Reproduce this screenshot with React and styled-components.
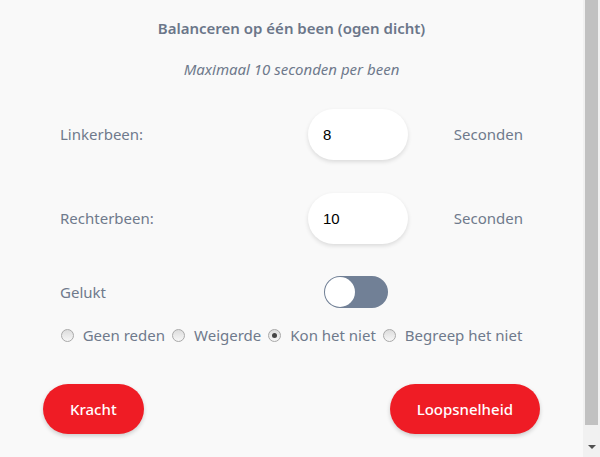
import React, { useState } from "react"
import styled, { createGlobalStyle } from "styled-components"

const GlobalStyle = createGlobalStyle`
  html, body { margin: 0; padding: 0; background: #f9f9f9; overflow: hidden; }
  body { font-family: "Noto Sans", "Open Sans", sans-serif; color: #6f7a8c; }
`

const Shell = styled.div`
  display: flex;
  height: 100vh;
`

const Page = styled.div`
  flex: 1;
  padding: 16px 43px 24px;
  box-sizing: border-box;
  overflow: hidden;
`

const ScrollBar = styled.div`
  width: 17px;
  flex: none;
  background: #f1f1f1;
  display: flex;
  flex-direction: column;
  align-items: center;
`

const Thumb = styled.div`
  width: 13px;
  height: 425px;
  background: #c1c1c1;
`

const ArrowDown = styled.div`
  margin-top: auto;
  margin-bottom: 8px;
  width: 0;
  height: 0;
  border-left: 4px solid transparent;
  border-right: 4px solid transparent;
  border-top: 4px solid #505050;
`

const Title = styled.h2`
  margin: 0;
  text-align: center;
  font-size: 15px;
  font-weight: 600;
  line-height: 24px;
  color: #6b7689;
`

const Subtitle = styled.p`
  margin: 17px 0 0;
  text-align: center;
  font-size: 15px;
  font-style: italic;
  line-height: 24px;
`

const Fields = styled.div`
  margin-top: 11px;
  padding: 0 17px;
  display: flex;
  flex-direction: column;
`

const Row = styled.div`
  display: grid;
  grid-template-columns: 1fr 100px 115px;
  align-items: center;
  height: ${p => p.$h || 84}px;
  font-size: 15px;
`

const Label = styled.span``

const Unit = styled.span`
  justify-self: end;
`

const NumberInput = styled.input`
  width: 100px;
  height: 51px;
  box-sizing: border-box;
  border: none;
  outline: none;
  border-radius: 26px;
  background: #fff;
  padding: 0 15px;
  font-family: "Liberation Sans", Arial, sans-serif;
  font-size: 15px;
  color: #000;
  box-shadow: 0 2px 4px rgba(0, 0, 0, 0.12);
`

const Switch = styled.button`
  margin-left: 16px;
  width: 64px;
  height: 32px;
  border: none;
  padding: 0 1px;
  border-radius: 16px;
  background: #718096;
  display: flex;
  align-items: center;
  justify-content: ${p => (p.$on ? "flex-end" : "flex-start")};
  cursor: pointer;
  &::before {
    content: "";
    width: 30px;
    height: 30px;
    border-radius: 50%;
    background: #fff;
  }
`

const Reasons = styled.div`
  display: flex;
  align-items: center;
  justify-content: center;
  gap: 7px;
  margin-top: 1px;
  font-size: 15px;
  line-height: 20px;
`

const Option = styled.label`
  display: flex;
  align-items: center;
  gap: 9px;
  cursor: pointer;
`

const Radio = styled.input.attrs({ type: "radio" })`
  appearance: none;
  margin: 0;
  width: 13px;
  height: 13px;
  border-radius: 50%;
  border: 1px solid #a9a9a9;
  background: linear-gradient(#dcdcdc, #f7f7f7);
  box-sizing: border-box;
  display: grid;
  place-items: center;
  &:checked::after {
    content: "";
    width: 5px;
    height: 5px;
    border-radius: 50%;
    background: #444;
  }
`

const Buttons = styled.div`
  margin-top: 39px;
  display: flex;
  justify-content: space-between;
`

const RedButton = styled.button`
  height: 50px;
  min-width: 100px;
  padding: 0 27px;
  border: none;
  border-radius: 25px;
  background: #ef1c25;
  color: #fff;
  font-family: inherit;
  font-size: 15px;
  font-weight: 500;
  box-shadow: 0 2px 4px rgba(0, 0, 0, 0.18);
  cursor: pointer;
`

const reasons = ["Geen reden", "Weigerde", "Kon het niet", "Begreep het niet"]

export default function App() {
  const [left, setLeft] = useState("8")
  const [right, setRight] = useState("10")
  const [ok, setOk] = useState(false)
  const [reason, setReason] = useState("Kon het niet")
  return (
    <Shell>
      <GlobalStyle />
      <Page>
        <Title>Balanceren op één been (ogen dicht)</Title>
        <Subtitle>Maximaal 10 seconden per been</Subtitle>
        <Fields>
          <Row>
            <Label>Linkerbeen:</Label>
            <NumberInput value={left} onChange={e => setLeft(e.target.value)} />
            <Unit>Seconden</Unit>
          </Row>
          <Row>
            <Label>Rechterbeen:</Label>
            <NumberInput value={right} onChange={e => setRight(e.target.value)} />
            <Unit>Seconden</Unit>
          </Row>
          <Row $h={64}>
            <Label>Gelukt</Label>
            <Switch $on={ok} onClick={() => setOk(!ok)} />
          </Row>
        </Fields>
        <Reasons>
          {reasons.map(r => (
            <Option key={r}>
              <Radio name="reden" checked={reason === r} onChange={() => setReason(r)} />
              {r}
            </Option>
          ))}
        </Reasons>
        <Buttons>
          <RedButton>Kracht</RedButton>
          <RedButton>Loopsnelheid</RedButton>
        </Buttons>
      </Page>
      <ScrollBar>
        <Thumb />
        <ArrowDown />
      </ScrollBar>
    </Shell>
  )
}
